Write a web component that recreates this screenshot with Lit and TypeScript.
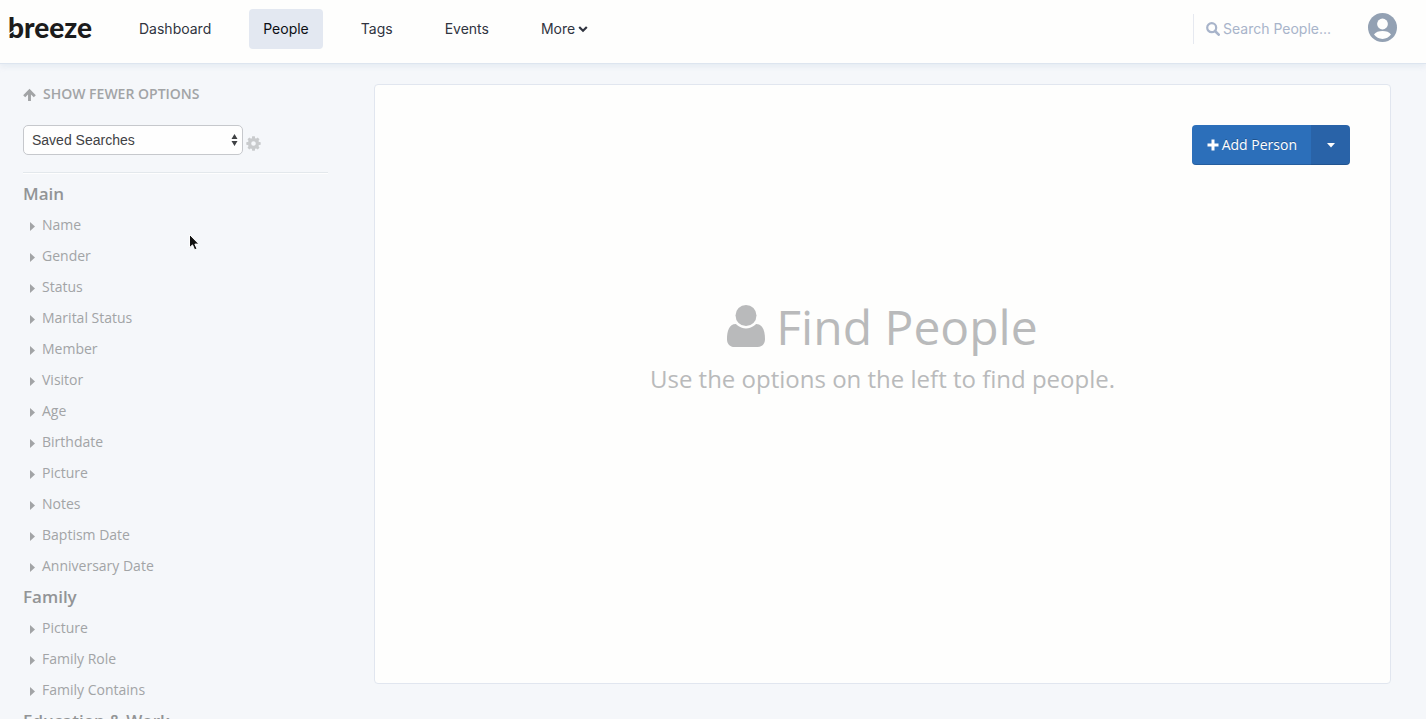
import { LitElement, html, css, svg } from "lit";
import { customElement, state } from "lit/decorators.js";
import { classMap } from "lit/directives/class-map.js";

interface Section {
  title: string;
  items: string[];
}

const SECTIONS: Section[] = [
  {
    title: "Main",
    items: [
      "Name", "Gender", "Status", "Marital Status", "Member", "Visitor",
      "Age", "Birthdate", "Picture", "Notes", "Baptism Date", "Anniversary Date",
    ],
  },
  { title: "Family", items: ["Picture", "Family Role", "Family Contains"] },
  { title: "Education & Work", items: [] },
];

const gearTeeth = [0, 45, 90, 135, 180, 225, 270, 315];

@customElement("app-header")
class AppHeader extends LitElement {
  @state() private active = "People";

  static styles = css`
    :host { display: block; font-family: Inter, "Liberation Sans", sans-serif; }
    header {
      display: flex;
      align-items: center;
      height: 64px;
      box-sizing: border-box;
      padding: 0 29px 5px 8px;
      background: #fefefd;
      border-bottom: 1px solid #dde5ef;
      box-shadow: 0 2px 6px rgba(200, 212, 228, 0.4);
    }
    .logo {
      position: relative;
      width: 84px;
      margin: 0 32px 4px 0;
      color: #1c1c1c;
      font: 900 28px/36px Lato, sans-serif;
      text-decoration: none;
    }
    .cut { position: absolute; left: 0; top: 20px; width: 8px; height: 8px; }
    nav { display: flex; gap: 24px; }
    .tab {
      display: flex;
      align-items: center;
      gap: 3px;
      height: 40px;
      padding: 0 14px;
      border: 0;
      border-radius: 4px;
      background: none;
      color: #30343f;
      font: 400 14px/20px Inter, sans-serif;
      text-decoration: none;
    }
    .tab:first-child { padding-left: 15px; }
    .tab.active { background: #e3e8f1; color: #0c0e14; }
    .chevron { width: 10px; height: 8px; }
    .search {
      display: flex;
      align-items: center;
      gap: 3px;
      height: 30px;
      margin-left: auto;
      padding-left: 12px;
      border-left: 1px solid #e6e9f0;
      color: #a8b4ca;
    }
    .search svg { width: 14px; height: 14px; }
    .search input {
      width: 145px;
      padding: 0;
      border: 0;
      outline: 0;
      background: none;
      color: #30343f;
      font: 400 14px/20px Inter, sans-serif;
    }
    .search input::placeholder { color: #a8b4ca; opacity: 1; }
    .avatar { display: flex; margin-bottom: 3px; padding: 0; border: 0; background: none; }
    .avatar svg { width: 29px; height: 29px; }
  `;

  render() {
    const tabs = ["Dashboard", "People", "Tags", "Events"];
    return html`
      <header>
        <a class="logo" href="#">breeze<svg class="cut" viewBox="0 0 8 8" aria-hidden="true"><path d="M0 5.500 6 1.500" stroke="#fefefd" stroke-width="1.400" /></svg></a>
        <nav>
          ${tabs.map((t) => html`<a href="#" class=${classMap({ tab: true, active: t === this.active })}
            @click=${() => (this.active = t)}>${t}</a>`)}
          <button class="tab" type="button">More
            <svg class="chevron" viewBox="0 0 10 8" aria-hidden="true"><path d="M1.200 2 5 5.800 8.800 2" fill="none" stroke="currentColor" stroke-width="2.200" /></svg>
          </button>
        </nav>
        <label class="search">
          <svg viewBox="0 0 14 14" aria-hidden="true"><circle cx="5.700" cy="5.700" r="4.500" fill="none" stroke="currentColor" stroke-width="2.200" /><path d="M9 9 12.700 12.700" stroke="currentColor" stroke-width="2.600" stroke-linecap="round" /></svg>
          <input type="text" placeholder="Search People..." aria-label="Search People" />
        </label>
        <button class="avatar" type="button" aria-label="Account">
          <svg viewBox="0 0 29 29"><circle cx="14.500" cy="14.500" r="14.500" fill="#93a1b3" /><circle cx="14.500" cy="11" r="5.400" fill="#fefefd" /><path d="M6 21.600C7.400 18.900 11 17.900 14.500 17.900s7.100 1 8.500 3.700c-2 2.800-5 4.300-8.500 4.300s-6.500-1.500-8.500-4.300Z" fill="#fefefd" /></svg>
        </button>
      </header>
    `;
  }
}

@customElement("search-options")
class SearchOptions extends LitElement {
  static styles = css`
    :host { display: block; color: #a2a4a6; font: 400 14px/31px "Open Sans", sans-serif; }
    button { padding: 0; border: 0; background: none; color: inherit; font: inherit; }
    .toggle {
      display: flex;
      align-items: center;
      gap: 7px;
      height: 20px;
      font-weight: 600;
      line-height: 20px;
    }
    .toggle svg { width: 13px; height: 13px; }
    .saved { display: flex; align-items: center; gap: 3px; margin-top: 21px; }
    .picker { display: grid; align-items: center; width: 220px; height: 30px; }
    .picker select, .picker svg { grid-area: 1 / 1; }
    select {
      appearance: none;
      width: 100%;
      height: 30px;
      padding: 0 20px 0 8px;
      border: 1px solid #c6c8cc;
      border-radius: 5px;
      background: #fefefe;
      color: #3f4144;
      font: 400 14px/20px "Liberation Sans", sans-serif;
    }
    .picker svg { justify-self: end; width: 7px; height: 14px; margin-right: 5px; pointer-events: none; }
    .gear { display: flex; padding-top: 6px; color: #c9cbcd; }
    .gear svg { width: 15px; height: 15px; }
    .rule { height: 1px; margin: 17px 0 5px; border: 0; background: #e3e8ec; box-shadow: 0 1px 0 #fefefe; }
    h2 { margin: 0; color: #929496; font-size: 17px; font-weight: 600; line-height: 31px; }
    ul { margin: 0; padding: 0; list-style: none; }
    li button { display: flex; align-items: center; gap: 7px; height: 31px; padding-left: 7px; line-height: 31px; }
    li svg { width: 5px; height: 9px; margin-top: 3px; }
  `;

  render() {
    return html`
      <button class="toggle" type="button">
        <svg viewBox="0 0 13 13" aria-hidden="true"><path d="M6.500 2.500V13M1.200 8.200 6.500 2.900l5.300 5.300" fill="none" stroke="currentColor" stroke-width="2.900" /></svg>
        SHOW FEWER OPTIONS
      </button>
      <div class="saved">
        <div class="picker">
          <select aria-label="Saved Searches"><option>Saved Searches</option></select>
          <svg viewBox="0 0 7 14" aria-hidden="true"><path d="M3.500 1 6.500 6h-6zM3.500 13 .5 8h6z" fill="#3f4144" /></svg>
        </div>
        <button class="gear" type="button" aria-label="Manage saved searches">
          <svg viewBox="0 0 15 15">
            ${gearTeeth.map((a) => svg`<path d="M5.800 2.800 6.200.3h2.600L9.200 2.800z" fill="currentColor" transform="rotate(${a} 7.500 7.500)" />`)}
            <circle cx="7.500" cy="7.500" r="3.900" fill="none" stroke="currentColor" stroke-width="3.200" />
          </svg>
        </button>
      </div>
      <hr class="rule" />
      ${SECTIONS.map((s) => html`
        <section>
          <h2>${s.title}</h2>
          <ul>
            ${s.items.map((i) => html`<li><button type="button"><svg viewBox="0 0 5 9" aria-hidden="true"><path d="M0 0 5 4.500 0 9z" fill="currentColor" /></svg>${i}</button></li>`)}
          </ul>
        </section>`)}
    `;
  }
}

@customElement("results-panel")
class ResultsPanel extends LitElement {
  static styles = css`
    :host {
      display: block;
      box-sizing: border-box;
      min-height: 600px;
      padding: 40px;
      background: #fefefd;
      border: 1px solid #e1e6ef;
      border-radius: 4px;
      font-family: "Open Sans", sans-serif;
    }
    .actions { display: flex; justify-content: flex-end; }
    .actions button {
      display: flex;
      align-items: center;
      gap: 3px;
      height: 40px;
      border: 0;
      color: #fefefe;
      font: 400 14px/20px "Open Sans", sans-serif;
      text-shadow: 0 -1px 0 rgba(0, 0, 0, 0.25);
      box-shadow: inset 0 -1px 0 rgba(0, 0, 0, 0.15);
    }
    .actions .add { padding: 0 14px 0 15px; border-radius: 4px 0 0 4px; background: #2c6fba; }
    .add svg { width: 12px; height: 12px; }
    .actions .more { justify-content: center; width: 39px; padding: 0; border-radius: 0 4px 4px 0; background: #2963a8; }
    .more svg { width: 8px; height: 5px; }
    .empty { margin-top: 127px; text-align: center; color: #b9babb; }
    h1 {
      display: flex;
      align-items: center;
      justify-content: center;
      gap: 11px;
      margin: 0;
      font-size: 48px;
      font-weight: 400;
      line-height: 70px;
    }
    h1 svg { width: 38px; height: 42px; margin-bottom: 2px; }
    p { margin: 0; font-size: 24px; line-height: 34px; }
  `;

  render() {
    return html`
      <div class="actions">
        <button class="add" type="button">
          <svg viewBox="0 0 12 12" aria-hidden="true"><path d="M6 .5v11M.5 6h11" stroke="currentColor" stroke-width="3" /></svg>
          Add Person
        </button>
        <button class="more" type="button" aria-label="More actions">
          <svg viewBox="0 0 8 5"><path d="M0 0h8L4 4.500z" fill="currentColor" /></svg>
        </button>
      </div>
      <div class="empty">
        <h1>
          <svg viewBox="0 0 38 42" aria-hidden="true"><circle cx="19" cy="10.500" r="10.500" fill="currentColor" /><path d="M8.800 19C2 19 0 26.500 0 34.200 0 39 3 42 7.500 42h23C35 42 38 39 38 34.200 38 26.500 36 19 29.200 19c-.6 0-4 4.400-10.200 4.400S9.400 19 8.800 19Z" fill="currentColor" /></svg>
          Find People
        </h1>
        <p>Use the options on the left to find people.</p>
      </div>
    `;
  }
}

@customElement("app-root")
class AppRoot extends LitElement {
  static styles = css`
    :host { display: block; height: 100vh; overflow: hidden; background: #f5f7fa; }
    main {
      display: grid;
      grid-template-columns: 305px minmax(0, 1fr);
      align-items: start;
      gap: 46px;
      padding: 20px 35px 0 23px;
    }
    .pointer { position: absolute; left: 188px; top: 233px; width: 12px; height: 19px; }
  `;

  render() {
    return html`
      <app-header></app-header>
      <main>
        <search-options></search-options>
        <results-panel></results-panel>
      </main>
      <svg class="pointer" viewBox="0 0 12 19" aria-hidden="true"><path d="M1.500 1.500v13.200l3-2.800 2.100 4.900 2.400-1-2.100-4.700h4z" fill="#111" stroke="#fefefe" stroke-width="1" /></svg>
    `;
  }
}
